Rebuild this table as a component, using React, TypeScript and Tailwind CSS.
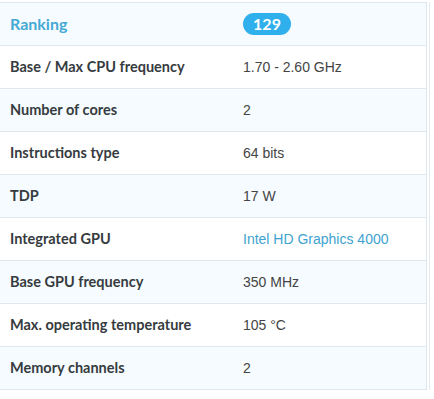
import React from 'react';

const rows: { label: string; value: string; link?: boolean }[] = [
  { label: 'Base / Max CPU frequency', value: '1.70 - 2.60 GHz' },
  { label: 'Number of cores', value: '2' },
  { label: 'Instructions type', value: '64 bits' },
  { label: 'TDP', value: '17 W' },
  { label: 'Integrated GPU', value: 'Intel HD Graphics 4000', link: true },
  { label: 'Base GPU frequency', value: '350 MHz' },
  { label: 'Max. operating temperature', value: '105 °C' },
  { label: 'Memory channels', value: '2' },
];

const labelFont = { fontFamily: 'Lato, "Open Sans", sans-serif' };
const valueFont = { fontFamily: '"Liberation Sans", Arial, sans-serif' };

const App: React.FC = () => {
  return (
    <div className="w-[434px] h-[399px] bg-white pt-[2px]">
      <div className="w-[430px] border-r border-[#e3ebf0] pr-[2px]">
        <div className="border-t border-r border-[#dfe8ee]">
          {/* Ranking row */}
          <div className="flex h-[43px] items-center border-b border-[#dfe8ee] bg-[#f5fbfe]">
            <div className="w-[243px] pl-[10px] text-[16px] font-bold text-[#45a9d4]" style={labelFont}>
              Ranking
            </div>
            <span
              className="inline-flex h-[22px] w-[48px] items-center justify-center rounded-full bg-[#2fb0ec] text-[16px] font-bold text-white"
              style={labelFont}
            >
              129
            </span>
          </div>

          {rows.map((row, i) => (
            <div
              key={row.label}
              className={`flex h-[43px] items-center border-b border-[#dfe8ee] ${
                i % 2 === 1 ? 'bg-[#f5fbfe]' : 'bg-white'
              }`}
            >
              <div className="w-[243px] pl-[10px] text-[14.5px] font-bold text-[#363b40]" style={labelFont}>
                {row.label}
              </div>
              <div
                className={`text-[14px] ${row.link ? 'text-[#3ea3d0]' : 'text-[#444]'}`}
                style={valueFont}
              >
                {row.value}
              </div>
            </div>
          ))}
        </div>
      </div>
    </div>
  );
};

export default App;
